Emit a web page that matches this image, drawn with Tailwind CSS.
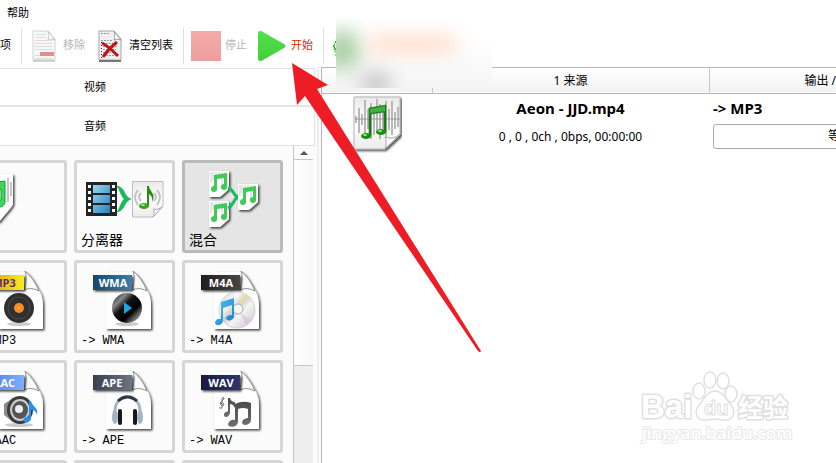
<!DOCTYPE html>
<html lang="zh-CN">
<head>
    <meta charset="UTF-8">
    <meta name="viewport" content="width=device-width, initial-scale=1.0">
    <title>格式转换</title>
    <script src="https://cdn.jsdelivr.net/npm/@tailwindcss/browser@4"></script>
</head>
<body class="relative flex h-screen flex-col overflow-hidden bg-white font-['Noto_Sans','Noto_Sans_CJK_SC',sans-serif] text-[11px] text-black">

    <!-- shared shapes -->
    <svg class="absolute h-0 w-0" aria-hidden="true">
        <defs>
            <linearGradient id="g-stop" x2="0" y2="1"><stop stop-color="#f7aaaa"/><stop offset="1" stop-color="#eb9e9e"/></linearGradient>
            <linearGradient id="g-play" x2="0" y2="1"><stop stop-color="#55e04f"/><stop offset="1" stop-color="#3fd035"/></linearGradient>
            <linearGradient id="g-page" x2="0" y2="1"><stop stop-color="#e9e9e9"/><stop offset=".5" stop-color="#fff"/><stop offset="1" stop-color="#ececec"/></linearGradient>
            <linearGradient id="g-film" x2="1" y2="1"><stop stop-color="#9ad4f2"/><stop offset="1" stop-color="#2a83b8"/></linearGradient>
            <linearGradient id="g-mp3" x2="1" y2="0"><stop stop-color="#f08c20"/><stop offset="1" stop-color="#f5ee1e"/></linearGradient>
            <linearGradient id="g-wma" x2="1" y2="0"><stop stop-color="#194668"/><stop offset="1" stop-color="#3f7ca8"/></linearGradient>
            <linearGradient id="g-m4a" x2="1" y2="0"><stop stop-color="#1e1e1e"/><stop offset="1" stop-color="#454545"/></linearGradient>
            <linearGradient id="g-aac" x2="1" y2="0"><stop stop-color="#4a7ce0"/><stop offset="1" stop-color="#7eb0ff"/></linearGradient>
            <linearGradient id="g-ape" x2="1" y2="0"><stop stop-color="#37404e"/><stop offset="1" stop-color="#6d7583"/></linearGradient>
            <linearGradient id="g-wav" x2="1" y2="0"><stop stop-color="#181b40"/><stop offset="1" stop-color="#30356e"/></linearGradient>
            <linearGradient id="g-blue" x2="1" y2="1"><stop stop-color="#5cc4f2"/><stop offset="1" stop-color="#0f80c8"/></linearGradient>
            <linearGradient id="g-note" x2="0" y2="1"><stop stop-color="#4a4a4a"/><stop offset="1" stop-color="#707070"/></linearGradient>
            <linearGradient id="g-disc" x2="1" y2="1"><stop stop-color="#d0d0d0"/><stop offset=".3" stop-color="#fafafa"/><stop offset=".45" stop-color="#cfcfcf"/><stop offset=".6" stop-color="#f4f4f4"/><stop offset="1" stop-color="#c4c4c4"/></linearGradient>
            <linearGradient id="g-black" x2="1" y2="1"><stop stop-color="#000"/><stop offset=".25" stop-color="#888"/><stop offset=".42" stop-color="#111"/><stop offset=".65" stop-color="#000"/><stop offset=".82" stop-color="#777"/><stop offset="1" stop-color="#000"/></linearGradient>
            <filter id="f-shadow" x="-20%" y="-20%" width="150%" height="150%"><feDropShadow dx="1.500" dy="1.500" stdDeviation=".8" flood-opacity=".75"/></filter>

            <!-- audio file sheet with a curled corner -->
            <g id="sheet">
                <path filter="url(#f-shadow)" fill="#fff" d="M29 8H57C62 12 66 18 69 25C73 30 74 36 74 43V65H29Z"/>
                <path fill="#fafafa" stroke="#8d8d8d" d="M56 7C58 13 57 19 55 26C60 24 64 24 70 27C67 19 62 12 56 7Z"/>
            </g>
            <!-- beamed note in an 18x18 box -->
            <g id="note">
                <path d="M5 3L18 1V15H15V6L8 7V17H5Z"/>
                <ellipse cx="5" cy="17" rx="3" ry="3"/>
                <ellipse cx="15" cy="15" rx="3" ry="3"/>
            </g>
            <!-- small music sheet with a cut corner -->
            <g id="minisheet">
                <path filter="url(#f-shadow)" fill="#fff" d="M0 0H20V18L11 26H0Z"/>
                <path stroke="#ccc" d="M2 1V12M4 1V9M7 1V10M10 1V6M13 1V15M16 1V17M18 3V15"/>
                <use href="#note" x="0" y="1" fill="#3ecb57"/>
            </g>
            <g id="brace"><path fill="#12bf5c" stroke="#0a9a48" stroke-width=".5" d="M0 0C6 1 7 6 9 9C10 11 12 12 14 13C12 14 10 15 9 17C7 20 6 25 0 26C3 22 3 19 5 16C6 14 7 13 8 13C7 13 6 12 5 10C3 7 3 4 0 0Z"/></g>
        </defs>
    </svg>

    <nav class="flex h-[26px] shrink-0 items-center px-[7px]">
        <button type="button">帮助</button>
    </nav>

    <!-- toolbar -->
    <div class="flex h-[41px] shrink-0 items-center whitespace-nowrap pb-[2px]">
        <button type="button" class="-ml-[11px] w-8 text-left">选项</button>
        <span class="h-9 w-px bg-[#e2e2e2]"></span>
        <button type="button" disabled class="ml-[10px] flex items-center gap-[7px] text-[#b4b4b4]">
            <svg class="h-8 w-6" viewBox="0 0 24 32">
                <path fill="#f7f7f7" stroke="#d2d2d2" d="M1 1H16L23 9V30H1Z"/>
                <path fill="#fff" stroke="#c8c8c8" d="M16 1C17 4 17 7 16 10C18 9 20 9 23 10Z"/>
                <path stroke="#cfe3ee" stroke-width="1" d="M4 4.500H14M4 7.500H14"/>
                <path stroke="#dcdcdc" d="M3 10.500H20M3 13.500H20M3 16.500H20M3 19.500H20M3 25.500H20M3 28.500H20"/>
                <path fill="#e48d8d" d="M8 22H22V26H8Z"/>
                <path stroke="#aaa" d="M1 31H23"/>
            </svg>
            移除
        </button>
        <button type="button" class="ml-[13px] flex items-center gap-[7px]">
            <svg class="h-8 w-6" viewBox="0 0 24 32">
                <path fill="#f0f0f0" stroke="#a5a5a5" d="M1 1H16L23 9V30H1Z"/>
                <path fill="#fff" stroke="#999" d="M16 1C17 4 17 7 16 10C18 9 20 9 23 10Z"/>
                <path stroke="#999" stroke-dasharray="2 1" d="M3 3.500H12M3 10.500H14M5 13.500H19M5 16.500H19M5 19.500H18M5 22.500H18M5 25.500H18"/>
                <path stroke="#333" stroke-dasharray="1 2" d="M3.500 12V28"/>
                <path stroke="#777" stroke-width="2" d="M1 31H23"/>
                <path fill="none" stroke="#be1518" stroke-width="3" d="M4 13C10 16 15 21 20 26M19 12C14 16 9 21 5 27"/>
            </svg>
            清空列表
        </button>
        <span class="ml-[10px] h-9 w-px bg-[#dedede]"></span>
        <button type="button" disabled class="ml-[7px] flex items-center gap-1 text-[#b4b4b4]">
            <svg class="h-[30px] w-[30px]" viewBox="0 0 30 30"><path fill="url(#g-stop)" d="M0 0H30V30H0Z"/></svg>
            停止
        </button>
        <button type="button" class="ml-[11px] flex items-center gap-[5px] text-[#e0270c]">
            <svg class="h-[30px] w-7" viewBox="0 0 28 30"><path fill="url(#g-play)" d="M0 3C0 0 2-1 5 1L26 13C28 14 28 16 26 17L5 29C2 31 0 30 0 27Z"/></svg>
            开始
        </button>
        <span class="ml-[10px] h-9 w-px bg-[#dedede]"></span>
        <svg class="ml-[9px] h-5 w-5" viewBox="0 0 20 20"><circle cx="10" cy="11" r="9" fill="#e4f4e0" stroke="#4fba3c"/><path stroke="#2e9a25" d="M0 9L5 17M2 5L6 10"/><ellipse cx="8" cy="19" rx="7" ry="1" fill="#aaa"/></svg>
    </div>

    <main class="flex min-h-0 grow">
        <!-- categories -->
        <aside class="flex w-[315px] shrink-0 flex-col overflow-hidden bg-[#fbfbfb]">
            <div class="mt-px shrink-0 border-y border-r border-[#e2e2e2] bg-white">
                <button type="button" class="block h-[38px] w-full border-b-2 border-[#e4e4e4] pr-[124px] text-center">视频</button>
                <button type="button" class="block h-[38px] w-full pr-[124px] text-center">音频</button>
            </div>
            <div class="flex min-h-0 grow">
                <div class="min-w-0 grow overflow-hidden pt-[14px] font-['Liberation_Mono','Noto_Sans_CJK_SC',monospace]">
                    <div class="-ml-[34px] grid w-max grid-cols-[repeat(3,101px)] auto-rows-[93px] gap-[7px]">
                        <button type="button" class="rounded-[3px] border-3 border-[#d6d6d6]" aria-label="音频">
                            <svg class="h-[86px] w-[95px]" viewBox="0 0 95 86">
                                <path filter="url(#f-shadow)" fill="#fff" d="M2 10H44V40C41 46 36 50 30 58H2Z"/>
                                <path stroke="#c6c6c6" stroke-width="2" d="M39 14V38M42 18V32"/>
                                <path fill="#41d45a" stroke="#159c32" d="M16 20L36 17V38C36 42 31 44 27 43C24 41 26 37 32 36V25L16 28Z"/>
                            </svg>
                        </button>
                        <button type="button" class="rounded-[3px] border-3 border-[#d6d6d6] text-left">
                            <svg class="h-[69px] w-[95px]" viewBox="0 0 95 69">
                                <path fill="#242424" d="M9 18H40V52H9Z"/>
                                <path fill="url(#g-film)" d="M16 21H33V29H16ZM16 31H33V39H16ZM16 41H33V49H16Z"/>
                                <path stroke="#fff" stroke-width="3" stroke-dasharray="3 3" d="M12.500 21V51M36.500 21V51"/>
                                <use href="#brace" x="40" y="22"/>
                                <path fill="url(#g-page)" stroke="#bdbdbd" d="M55.500 17.500H86V42L76 53H55.500Z"/>
                                <path fill="#fff" stroke="#aaa" d="M76 53C78 49 77 46 76 45C80 46 83 45 86 42Z"/>
                                <path fill="none" stroke="#c2c2c2" stroke-width="2" d="M61 26Q55 33 61 41M64 29Q60 33 64 37M80 26Q86 33 80 41M77 29Q81 33 77 37"/>
                                <path fill="#258d14" d="M70 22H72C72 27 80 30 75 38C76 32 73 31 72 30V42H70Z"/>
                                <ellipse cx="67" cy="42" rx="5" ry="3" fill="#37a51b"/>
                                <ellipse cx="66" cy="41" rx="2" ry="1" fill="#a8ef63"/>
                            </svg>
                            <span class="block pl-1 text-[14px] leading-4">分离器</span>
                        </button>
                        <button type="button" class="rounded-[3px] border-3 border-[#bababa] bg-[#e5e5e5] text-left">
                            <svg class="h-[69px] w-[95px]" viewBox="0 0 95 69">
                                <use href="#minisheet" x="24" y="7"/>
                                <use href="#minisheet" x="24" y="37"/>
                                <path fill="none" stroke="#17bd60" stroke-width="3" d="M43 24C49 25 48 32 53 33C48 35 49 42 43 44"/>
                                <use href="#minisheet" x="53" y="20"/>
                            </svg>
                            <span class="block pl-1 text-[14px] leading-4">混合</span>
                        </button>

                        <button type="button" class="rounded-[3px] border-3 border-[#d6d6d6] text-left">
                            <svg class="h-[69px] w-[95px]" viewBox="0 0 95 69">
                                <use href="#sheet"/>
                                <path filter="url(#f-shadow)" fill="url(#g-mp3)" d="M16 11H55V26H16Z"/>
                                <text x="35" y="23" text-anchor="middle" font-family="Open Sans" font-size="11" font-weight="700" fill="#5a3560">MP3</text>
                                <ellipse cx="50" cy="60" rx="12" ry="2" fill="#ccc"/>
                                <circle cx="50" cy="44" r="15" fill="#303030"/>
                                <circle cx="50" cy="44" r="11" fill="none" stroke="#484848"/>
                                <circle cx="50" cy="44" r="5" fill="#ff8a1d"/>
                                <circle cx="50" cy="44" r="1" fill="#ffe0b5"/>
                            </svg>
                            <span class="block whitespace-nowrap pl-1 text-[12px] leading-4">-&gt; MP3</span>
                        </button>
                        <button type="button" class="rounded-[3px] border-3 border-[#d6d6d6] text-left">
                            <svg class="h-[69px] w-[95px]" viewBox="0 0 95 69">
                                <use href="#sheet"/>
                                <path filter="url(#f-shadow)" fill="url(#g-wma)" d="M16 11H55V26H16Z"/>
                                <text x="36" y="23" text-anchor="middle" font-family="Open Sans" font-size="11" font-weight="700" fill="#fff">WMA</text>
                                <ellipse cx="50" cy="60" rx="12" ry="2" fill="#ccc"/>
                                <circle cx="50" cy="44" r="15" fill="url(#g-black)"/>
                                <path fill="#18a5e5" d="M47 38L55 44L47 50Z"/>
                            </svg>
                            <span class="block whitespace-nowrap pl-1 text-[12px] leading-4">-&gt; WMA</span>
                        </button>
                        <button type="button" class="rounded-[3px] border-3 border-[#d6d6d6] text-left">
                            <svg class="h-[69px] w-[95px]" viewBox="0 0 95 69">
                                <use href="#sheet"/>
                                <path filter="url(#f-shadow)" fill="url(#g-m4a)" d="M16 11H55V26H16Z"/>
                                <text x="36" y="23" text-anchor="middle" font-family="Open Sans" font-size="11" font-weight="700" fill="#fff">M4A</text>
                                <circle cx="52" cy="46" r="18" fill="url(#g-disc)" stroke="#d2d2d2"/>
                                <path fill="#eee58f" opacity=".6" d="M54 42L58 29L64 33Z"/>
                                <path fill="#d8b8e0" opacity=".6" d="M55 49L61 61L66 56Z"/>
                                <circle cx="53" cy="45" r="5" fill="#f5f5f5" stroke="#aaa"/>
                                <path fill="url(#g-blue)" d="M36 38L49 34V52C49 57 41 58 41 54C42 51 45 51 47 51V41L38 44V56C38 62 30 63 30 58C31 55 34 54 36 55Z"/>
                            </svg>
                            <span class="block whitespace-nowrap pl-1 text-[12px] leading-4">-&gt; M4A</span>
                        </button>

                        <button type="button" class="rounded-[3px] border-3 border-[#d6d6d6] text-left">
                            <svg class="h-[69px] w-[95px]" viewBox="0 0 95 69">
                                <use href="#sheet"/>
                                <path filter="url(#f-shadow)" fill="url(#g-aac)" d="M16 11H55V26H16Z"/>
                                <text x="35" y="23" text-anchor="middle" font-family="Open Sans" font-size="11" font-weight="700" fill="#fff">AAC</text>
                                <ellipse cx="50" cy="61" rx="14" ry="2" fill="#ccc"/>
                                <path fill="#8c8c8c" d="M35 40L44 34V58L35 51Z"/>
                                <ellipse cx="51" cy="46" rx="13" ry="14" fill="#3c3c3c"/>
                                <ellipse cx="51" cy="46" rx="10" ry="11" fill="#d0d0d0"/>
                                <ellipse cx="51" cy="46" rx="8" ry="9" fill="#555"/>
                                <circle cx="50" cy="45" r="4" fill="#eee"/>
                                <path fill="#2492ec" d="M60 37H62C63 43 70 43 68 51C67 47 65 46 62 46V54C62 59 55 60 54 56C55 53 58 52 60 53Z"/>
                            </svg>
                            <span class="block whitespace-nowrap pl-1 text-[12px] leading-4">-&gt; AAC</span>
                        </button>
                        <button type="button" class="rounded-[3px] border-3 border-[#d6d6d6] text-left">
                            <svg class="h-[69px] w-[95px]" viewBox="0 0 95 69">
                                <use href="#sheet"/>
                                <path filter="url(#f-shadow)" fill="url(#g-ape)" d="M16 11H55V26H16Z"/>
                                <text x="35" y="23" text-anchor="middle" font-family="Open Sans" font-size="11" font-weight="700" fill="#fff">APE</text>
                                <path fill="none" stroke="#a9b6c4" stroke-width="3" d="M38 52C35 26 66 26 63 52"/>
                                <path fill="none" stroke="#303844" stroke-width="3" d="M41 37Q50 29 60 37"/>
                                <ellipse cx="38" cy="53" rx="3" ry="7" fill="#a2b5c8"/>
                                <ellipse cx="63" cy="53" rx="3" ry="7" fill="#a2b5c8"/>
                                <rect x="41" y="45" width="4" height="16" rx="2" fill="#181818"/>
                                <rect x="56" y="45" width="4" height="16" rx="2" fill="#181818"/>
                            </svg>
                            <span class="block whitespace-nowrap pl-1 text-[12px] leading-4">-&gt; APE</span>
                        </button>
                        <button type="button" class="rounded-[3px] border-3 border-[#d6d6d6] text-left">
                            <svg class="h-[69px] w-[95px]" viewBox="0 0 95 69">
                                <use href="#sheet"/>
                                <path filter="url(#f-shadow)" fill="url(#g-wav)" d="M16 11H55V26H16Z"/>
                                <text x="36" y="23" text-anchor="middle" font-family="Open Sans" font-size="11" font-weight="700" fill="#fff">WAV</text>
                                <path fill="none" stroke="#777" d="M37 44V34Q40 33 39 35L35 39Q36 43 39 41Q38 37 36 40M37 44Q34 45 35 43"/>
                                <path fill="url(#g-note)" d="M43 34L45 34Q46 38 50 38V44Q48 40 45 40V49C44 54 38 54 39 50C40 48 42 47 43 48Z"/>
                                <path fill="url(#g-note)" d="M50 40Q58 36 66 39V56C66 61 57 63 57 58C58 55 61 54 63 54V45Q58 43 53 45V58C52 64 43 64 43 60C44 56 48 55 50 56Z"/>
                            </svg>
                            <span class="block whitespace-nowrap pl-1 text-[12px] leading-4">-&gt; WAV</span>
                        </button>

                        <button type="button" class="rounded-[3px] border-3 border-[#d6d6d6]" aria-label="音频"></button>
                        <button type="button" class="rounded-[3px] border-3 border-[#d6d6d6]" aria-label="音频"></button>
                        <button type="button" class="rounded-[3px] border-3 border-[#d6d6d6]" aria-label="音频"></button>
                    </div>
                </div>
                <!-- scrollbar -->
                <div class="mr-[2px] flex w-5 shrink-0 flex-col border-l border-[#c6c6c6] bg-[#eeeeee]">
                    <button type="button" class="flex h-[14px] shrink-0 items-center justify-center border-b border-[#c6c6c6] bg-[#fbfbfb]" aria-label="向上滚动">
                        <svg class="h-1 w-2" viewBox="0 0 8 4"><path fill="#555" d="M0 4L4 0L8 4Z"/></svg>
                    </button>
                    <div class="h-[206px] shrink-0 border-b border-[#c6c6c6] bg-linear-to-r from-white to-[#f7f7f7]"></div>
                </div>
            </div>
        </aside>
        <div class="w-[6px] shrink-0 border-x-2 border-[#fbfbfb] bg-[#eeeeee]"></div>

        <!-- task list -->
        <section class="min-w-0 grow overflow-hidden border-l border-t border-[#b6b6b6] bg-white">
            <table class="w-full table-fixed border-collapse text-[12px]">
                <colgroup>
                    <col class="w-[110px]">
                    <col class="w-[277px]">
                    <col>
                </colgroup>
                <thead>
                    <tr class="h-[25px] border-b border-[#b6b6b6] bg-linear-to-b from-white to-[#f3f3f3]">
                        <th class="h-6 border-r border-[#c8c8c8] p-0"></th>
                        <th class="border-r border-[#c8c8c8] p-0 pt-[2px] font-normal">1 来源</th>
                        <th class="overflow-hidden whitespace-nowrap p-0 pt-[2px] pl-[95px] text-left font-normal">输出 /</th>
                    </tr>
                </thead>
                <tbody>
                    <tr class="align-top">
                        <td class="p-0 pt-px pl-[30px]">
                            <svg class="h-[58px] w-[50px]" viewBox="0 0 50 58">
                                <path filter="url(#f-shadow)" fill="url(#g-page)" stroke="#b6b6b6" d="M2 2H48V40L33 54H2Z"/>
                                <path stroke="#b8b8b8" stroke-width="2" d="M4 21V28M7 13V38M10 19V30M13 5V42M16 14V34M19 8V44M22 12V40M25 4V38M28 9V44M31 12V34M34 6V42M37 14V35M40 6V40M43 17V34M46 12V32"/>
                                <path stroke="#999" d="M3 24H48"/>
                                <path fill="#fafafa" stroke="#a5a5a5" d="M33 54C35 49 34 45 33 42C39 44 44 43 48 39Z"/>
                                <path fill="#188a18" stroke="#0c570c" stroke-width=".5" d="M17 13L34 10V37H32V17L19 19V41H17Z"/>
                                <path fill="#3fb23d" d="M18 14L33 11V16L18 18Z"/>
                                <ellipse cx="14" cy="41" rx="5" ry="3" fill="#188f10"/>
                                <ellipse cx="29" cy="37" rx="5" ry="3" fill="#188f10"/>
                                <ellipse cx="13" cy="40" rx="2" ry="1" fill="#9bea73"/>
                                <ellipse cx="28" cy="36" rx="2" ry="1" fill="#9bea73"/>
                            </svg>
                        </td>
                        <td class="p-0 pt-1 text-center">
                            <p class="text-[15px] leading-5 font-bold">Aeon - JJD.mp4</p>
                            <p class="mt-[9px] leading-5">0 , 0 , 0ch , 0bps, 00:00:00</p>
                        </td>
                        <td class="overflow-hidden p-0 pt-1 pl-1">
                            <p class="text-[15px] leading-5 font-bold">-&gt; MP3</p>
                            <button type="button" class="mt-[6px] block h-[25px] w-[266px] rounded-[3px] border border-[#aaa] bg-white text-center">等待中</button>
                        </td>
                    </tr>
                </tbody>
            </table>
        </section>
    </main>

    <!-- smudged part of the toolbar -->
    <div class="absolute top-[18px] left-[336px] h-[70px] w-[156px] overflow-hidden bg-linear-to-b from-white from-30% to-[#f5f5f5]">
        <div class="absolute top-[12px] -left-3 h-10 w-9 rounded-full bg-[#a8cfa4] blur-[10px]"></div>
        <div class="absolute top-[16px] left-[32px] h-5 w-[90px] rounded-full bg-[#ffe0d0] blur-[9px]"></div>
        <div class="absolute top-[54px] left-[24px] h-6 w-8 rounded-full bg-[#c8c8c8] blur-[9px]"></div>
    </div>

    <!-- pointer arrow -->
    <svg class="pointer-events-none absolute top-[63px] left-[292px] h-[290px] w-[190px]" viewBox="0 0 190 290">
        <path fill="#ee1c24" d="M0 0L36 22L25 26L189 288Q188 290 186 288L13 33L5 42Z"/>
    </svg>

    <!-- site watermark -->
    <svg class="pointer-events-none absolute right-[39px] bottom-[16px] h-[76px] w-[160px]" viewBox="0 0 160 76" fill="#fff" stroke="#e0e0e0">
        <g font-family="Liberation Sans" font-weight="700" stroke-width="3" paint-order="stroke" stroke-linejoin="round">
            <text x="4" y="47" font-size="33">Bai</text>
            <text x="101" y="46" font-size="25" font-family="Noto Sans CJK SC">经验</text>
            <text x="5" y="68" font-size="17" font-family="Open Sans" font-weight="600" stroke-width="2" stroke="#e8e8e8">jingyan.baidu.com</text>
        </g>
        <g stroke-width="1.500">
            <ellipse cx="62" cy="20" rx="6" ry="8"/>
            <ellipse cx="73" cy="9" rx="6" ry="8"/>
            <ellipse cx="86" cy="10" rx="6" ry="8"/>
            <ellipse cx="94" cy="23" rx="6" ry="8"/>
            <path d="M78 20C86 20 90 30 94 34C99 40 97 49 89 49C84 49 82 48 78 48C74 48 72 49 67 49C59 49 57 40 62 34C66 30 70 20 78 20Z"/>
        </g>
        <text x="67" y="44" font-size="20" font-family="Liberation Sans" font-weight="700">du</text>
    </svg>
</body>
</html>
